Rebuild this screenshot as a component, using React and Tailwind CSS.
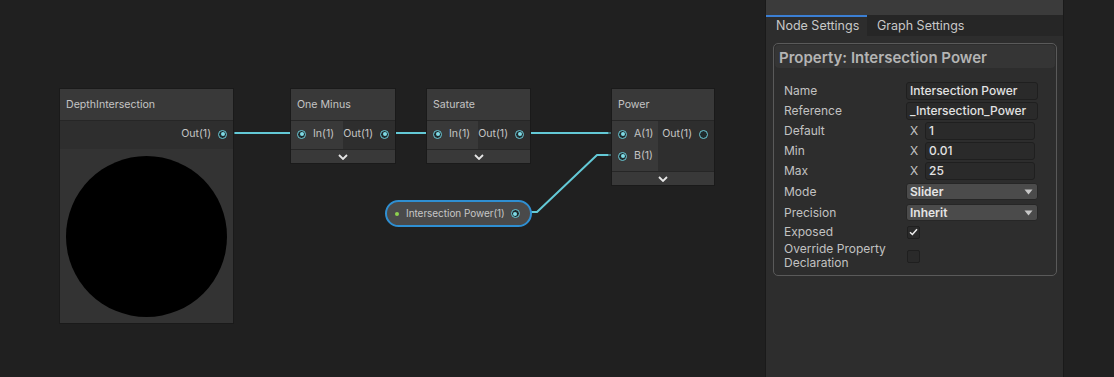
import React from "react";

const FONT = { fontFamily: "Inter, 'Noto Sans', sans-serif" };

function Port({ connected = true }) {
  return (
    <span className="relative flex h-[9px] w-[9px] shrink-0 items-center justify-center rounded-full border border-[#6cc9d6] bg-[#1f2a2c]">
      {connected && <span className="h-[4px] w-[4px] rounded-full bg-[#7fdbe6]" />}
    </span>
  );
}

function InPort({ label }) {
  return (
    <div className="flex h-[22px] items-center gap-[7px] pl-[6px]">
      <Port />
      <span>{label}</span>
    </div>
  );
}

function OutPort({ label, connected = true }) {
  return (
    <div className="flex h-[22px] items-center justify-end gap-[7px] pr-[6px]">
      <span>{label}</span>
      <Port connected={connected} />
    </div>
  );
}

function Chevron() {
  return (
    <svg width="10" height="6" viewBox="0 0 10 6">
      <path d="M1 1 L5 5 L9 1" fill="none" stroke="#e6e6e6" strokeWidth="1.8" />
    </svg>
  );
}

function Node({ x, y, w, inW, title, inputs, outputs, outConnected = true }) {
  return (
    <div
      className="absolute flex flex-col border border-[#1a1a1a] text-[10.6px] text-[#c4c4c4]"
      style={{ left: x, top: y, width: w }}
    >
      <div className="flex h-[32px] items-center border-b border-[#262626] bg-[#393939] pl-[6px]">
        {title}
      </div>
      <div className="flex">
        <div className="flex flex-col bg-[#393939] pt-[2px] pb-[4px]" style={{ width: inW }}>
          {inputs.map((l) => (
            <InPort key={l} label={l} />
          ))}
        </div>
        <div className="flex flex-1 flex-col bg-[#2e2e2e] pt-[2px] pb-[4px]">
          {outputs.map((l) => (
            <OutPort key={l} label={l} connected={outConnected} />
          ))}
        </div>
      </div>
      <div className="flex h-[14px] items-center justify-center border-t border-[#262626] bg-[#393939]">
        <Chevron />
      </div>
    </div>
  );
}

function Canvas() {
  return (
    <div className="relative h-full flex-1 overflow-hidden bg-[#202020]">
      <svg className="absolute left-0 top-0" width="765" height="377">
        <g fill="none" strokeWidth="2" strokeLinecap="round">
          <path d="M230 133 L296 133" stroke="#63c9d6" />
          <path d="M388 133 L432 133" stroke="#63c9d6" />
          <path d="M523 133 L617 133" stroke="#63c9d6" />
          <path d="M531 212 L537 212 L597 155 L617 155" stroke="#63c9d6" strokeLinejoin="round" />
          <path d="M226 133 L234 133" stroke="#3d6c72" />
          <path d="M609 133 L617 133" stroke="#3d6c72" />
          <path d="M609 155 L617 155" stroke="#3d6c72" />
        </g>
      </svg>

      {/* DepthIntersection */}
      <div
        className="absolute flex flex-col border border-[#1a1a1a] text-[10.6px] text-[#c4c4c4]"
        style={{ left: 59, top: 88, width: 175 }}
      >
        <div className="flex h-[32px] items-center border-b border-[#262626] bg-[#393939] pl-[6px]">
          DepthIntersection
        </div>
        <div className="bg-[#2e2e2e] pt-[2px] pb-[4px]">
          <OutPort label="Out(1)" />
        </div>
        <div className="flex h-[174px] items-center justify-center bg-[#333333]">
          <div className="h-[161px] w-[161px] rounded-full bg-black" />
        </div>
      </div>

      <Node x={290} y={88} w={106} inW={58} title="One Minus" inputs={["In(1)"]} outputs={["Out(1)"]} />
      <Node x={426} y={88} w={105} inW={57} title="Saturate" inputs={["In(1)"]} outputs={["Out(1)"]} />
      <Node
        x={611}
        y={88}
        w={104}
        inW={46}
        title="Power"
        inputs={["A(1)", "B(1)"]}
        outputs={["Out(1)"]}
        outConnected={false}
      />

      {/* Property pill */}
      <div
        className="absolute flex items-center whitespace-nowrap rounded-full border-2 border-[#2f8fd2] bg-[#4a4a4a] text-[10px] tracking-[-0.05px] text-[#c6c6c6]"
        style={{ left: 385, top: 200, width: 147, height: 27 }}
      >
        <span className="ml-[8px] h-[4px] w-[4px] shrink-0 rounded-full bg-[#8ed14f]" />
        <span className="ml-[7px]">Intersection Power(1)</span>
        <span className="ml-[6px]">
          <Port />
        </span>
      </div>
    </div>
  );
}

function Label({ children }) {
  return <div className="w-[122px] shrink-0 text-[12px] leading-[14px] text-[#c2c2c2]">{children}</div>;
}

function TextField({ value }) {
  return (
    <div className="flex h-[18px] w-[132px] items-center rounded-[3px] border border-[#1f1f1f] bg-[#2a2a2a] pl-[3px] text-[12px] font-medium text-[#e2e2e2]">
      {value}
    </div>
  );
}

function NumField({ value }) {
  return (
    <div className="flex items-center">
      <span className="w-[19px] pl-[4px] text-[12px] text-[#c2c2c2]">X</span>
      <div className="flex h-[18px] w-[110px] items-center rounded-[3px] border border-[#1f1f1f] bg-[#2a2a2a] pl-[3px] text-[12px] font-medium text-[#e2e2e2]">
        {value}
      </div>
    </div>
  );
}

function Dropdown({ value }) {
  return (
    <div className="flex h-[17px] w-[132px] items-center justify-between rounded-[3px] border border-[#262626] bg-[#4b4b4b] pl-[3px] pr-[4px] text-[12px] font-semibold text-[#e4e4e4]">
      <span>{value}</span>
      <svg width="9" height="6" viewBox="0 0 9 6">
        <path d="M0.5 0.5 L8.5 0.5 L4.5 5.5 Z" fill="#c8c8c8" />
      </svg>
    </div>
  );
}

function Checkbox({ checked }) {
  return (
    <div className="ml-[1px] flex h-[13px] w-[13px] items-center justify-center rounded-[2px] border border-[#1f1f1f] bg-[#2a2a2a]">
      {checked && (
        <svg width="9" height="8" viewBox="0 0 9 8">
          <path d="M1 4.2 L3.4 6.5 L8 1.2" fill="none" stroke="#eeeeee" strokeWidth="1.5" />
        </svg>
      )}
    </div>
  );
}

function Row({ label, children }) {
  return (
    <div className="flex h-[20px] items-center">
      <Label>{label}</Label>
      {children}
    </div>
  );
}

function Panel() {
  return (
    <div className="flex h-full w-[298px] shrink-0 flex-col border-l border-[#1a1a1a] bg-[#2d2d2d]">
      <div className="h-[15px] bg-[#3b3b3b]" />
      <div className="flex h-[21px] bg-[#262626] text-[12.5px] text-[#c8c8c8]">
        <div className="flex w-[101px] items-center border-t-2 border-[#3b7fd4] bg-[#2d2d2d] pl-[10px]">
          Node Settings
        </div>
        <div className="flex items-center border-t-2 border-transparent pl-[10px]">Graph Settings</div>
      </div>
      <div className="px-[7px] pt-[7px]">
        <div className="flex h-[233px] w-[284px] flex-col rounded-[5px] border border-[#5a5a5a] p-[1px]">
          <div className="flex h-[23px] items-center rounded-[4px] bg-[#353535] pl-[4px] pt-[3px] text-[15px] font-semibold text-[#b4b4b4]">
            Property: Intersection Power
          </div>
          <div className="flex flex-col pl-[9px] pt-[13px]">
            <Row label="Name">
              <TextField value="Intersection Power" />
            </Row>
            <Row label="Reference">
              <TextField value="_Intersection_Power" />
            </Row>
            <Row label="Default">
              <NumField value="1" />
            </Row>
            <Row label="Min">
              <NumField value="0.01" />
            </Row>
            <Row label="Max">
              <NumField value="25" />
            </Row>
            <div className="flex h-[21px] items-center">
              <Label>Mode</Label>
              <Dropdown value="Slider" />
            </div>
            <div className="flex h-[21px] items-center">
              <Label>Precision</Label>
              <Dropdown value="Inherit" />
            </div>
            <div className="flex h-[18px] items-center">
              <Label>Exposed</Label>
              <Checkbox checked />
            </div>
            <div className="flex h-[30px] items-center">
              <Label>
                Override Property
                <br />
                Declaration
              </Label>
              <Checkbox />
            </div>
          </div>
        </div>
      </div>
    </div>
  );
}

export default function App() {
  return (
    <div className="flex h-[377px] w-[1114px] overflow-hidden bg-[#202020]" style={FONT}>
      <Canvas />
      <Panel />
      <div className="h-full w-[51px] shrink-0 border-l border-[#1a1a1a] bg-[#212121]" />
    </div>
  );
}
